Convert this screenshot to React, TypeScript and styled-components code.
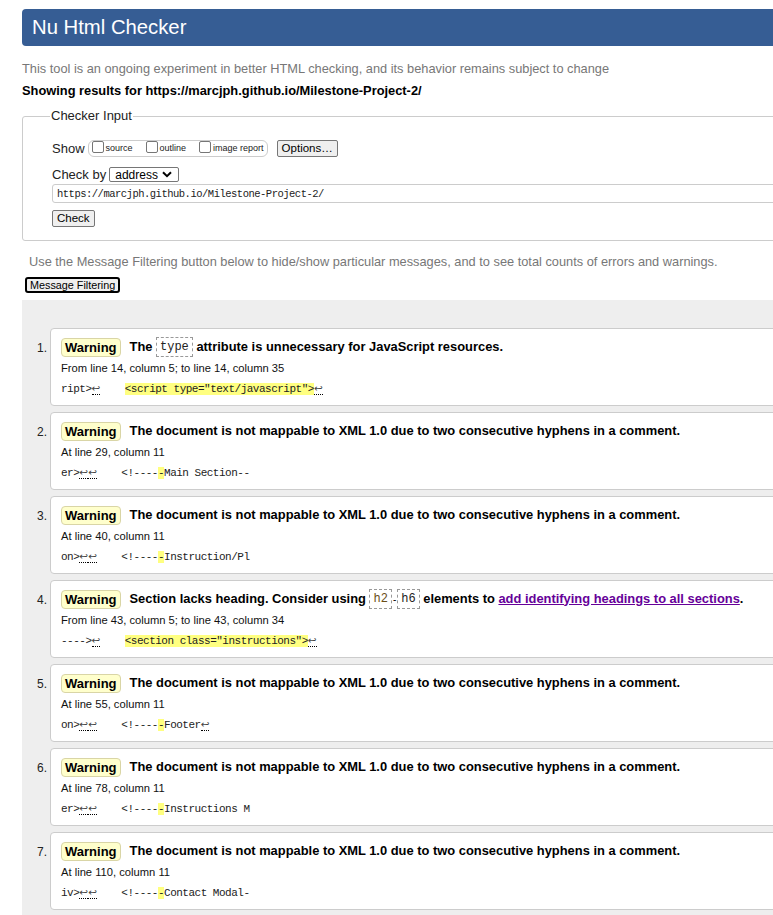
import React from 'react';
import styled, { createGlobalStyle } from 'styled-components';

type Piece =
  | { kind: 'text'; value: string }
  | { kind: 'nl' }
  | { kind: 'mark'; value: string };

type Message = {
  title: React.ReactNode;
  location: string;
  extract: Piece[];
};

const t = (value: string): Piece => ({ kind: 'text', value });
const nl: Piece = { kind: 'nl' };
const mark = (value: string): Piece => ({ kind: 'mark', value });

const hyphens = 'The document is not mappable to XML 1.0 due to two consecutive hyphens in a comment.';

const commentExtract = (before: string, after: string, trailingNl = false): Piece[] => {
  const pieces: Piece[] = [t(before), nl, nl, t('    <!----'), mark('-'), t(after)];
  if (trailingNl) pieces.push(nl);
  return pieces;
};

// built lazily so the styled parts below exist by the time it runs
const getMessages = (): Message[] => [
  {
    title: (
      <>
        The <Code>type</Code> attribute is unnecessary for JavaScript resources.
      </>
    ),
    location: 'From line 14, column 5; to line 14, column 35',
    extract: [t('ript>'), nl, t('    '), mark('<script type="text/javascript">'), nl],
  },
  {
    title: hyphens,
    location: 'At line 29, column 11',
    extract: commentExtract('er>', 'Main Section--'),
  },
  {
    title: hyphens,
    location: 'At line 40, column 11',
    extract: commentExtract('on>', 'Instruction/Pl'),
  },
  {
    title: (
      <>
        Section lacks heading. Consider using <Code $tint>h2</Code>
        <Dash>-</Dash>
        <Code>h6</Code> elements to{' '}
        <Link href="#">add identifying headings to all sections</Link>.
      </>
    ),
    location: 'From line 43, column 5; to line 43, column 34',
    extract: [t('---->'), nl, t('    '), mark('<section class="instructions">'), nl],
  },
  {
    title: hyphens,
    location: 'At line 55, column 11',
    extract: commentExtract('on>', 'Footer', true),
  },
  {
    title: hyphens,
    location: 'At line 78, column 11',
    extract: commentExtract('er>', 'Instructions M'),
  },
  {
    title: hyphens,
    location: 'At line 110, column 11',
    extract: commentExtract('iv>', 'Contact Modal-'),
  },
];

const Chevron = () => (
  <svg width="10" height="7" viewBox="0 0 10 7">
    <path d="M1 1.2 L5 5.2 L9 1.2" fill="none" stroke="#000" strokeWidth="2" />
  </svg>
);

const App: React.FC = () => (
  <>
    <GlobalStyle />
    <Page>
      <Banner>
        <Title>Nu Html Checker</Title>
      </Banner>
      <Intro>This tool is an ongoing experiment in better HTML checking, and its behavior remains subject to change</Intro>
      <Showing>Showing results for https://marcjph.github.io/Milestone-Project-2/</Showing>

      <Fieldset>
        <Legend>Checker Input</Legend>
        <ShowRow>
          <Label>Show</Label>
          <CheckGroup>
            <CheckLabel>
              <Box type="checkbox" />
              source
            </CheckLabel>
            <CheckLabel>
              <Box type="checkbox" />
              outline
            </CheckLabel>
            <CheckLabel>
              <Box type="checkbox" />
              image report
            </CheckLabel>
          </CheckGroup>
          <Button>Options…</Button>
        </ShowRow>
        <CheckByRow>
          <Label>Check by</Label>
          <Select>
            address
            <Chevron />
          </Select>
        </CheckByRow>
        <UrlInput>https://marcjph.github.io/Milestone-Project-2/</UrlInput>
        <SubmitRow>
          <Button>Check</Button>
        </SubmitRow>
      </Fieldset>

      <FilterNote>
        Use the Message Filtering button below to hide/show particular messages, and to see total counts of errors and warnings.
      </FilterNote>
      <FilterButton>Message Filtering</FilterButton>

      <ResultsPanel>
        <MessageList>
          {getMessages().map((msg, idx) => (
            <MessageRow key={`msg-${idx}`}>
              <Number>{idx + 1}.</Number>
              <Card>
                <TitleLine>
                  <Badge>Warning</Badge>
                  <MessageText>{msg.title}</MessageText>
                </TitleLine>
                <Location>{msg.location}</Location>
                <Extract>
                  {msg.extract.map((piece, i) => {
                    if (piece.kind === 'nl') return <Newline key={i} title="Line break">↩</Newline>;
                    if (piece.kind === 'mark') return <Highlight key={i}>{piece.value}</Highlight>;
                    return <span key={i}>{piece.value}</span>;
                  })}
                </Extract>
              </Card>
            </MessageRow>
          ))}
        </MessageList>
      </ResultsPanel>
    </Page>
  </>
);

export default App;

const GlobalStyle = createGlobalStyle`
  body {
    margin: 0;
    overflow: hidden;
    background: #fff;
    font-family: "Liberation Sans", Arial, sans-serif;
    color: #000;
  }
`;

const Page = styled.div`
  width: 830px;
  padding: 9px 0 0 22px;
`;

const Banner = styled.header`
  height: 37px;
  background: #365d94;
  border-radius: 4px;
  display: flex;
  align-items: center;
  padding-left: 10px;
`;

const Title = styled.h1`
  margin: 0;
  font-size: 20.3px;
  font-weight: normal;
  color: #fff;
`;

const Intro = styled.p`
  margin: 15px 0 0;
  font-size: 12.8px;
  line-height: 16px;
  color: #777;
`;

const Showing = styled.p`
  margin: 6px 0 0;
  font-size: 12.85px;
  line-height: 16px;
  font-weight: bold;
`;

const Fieldset = styled.fieldset`
  margin: 9px 0 0;
  padding: 0 0 13px 29px;
  border: 1px solid #ccc;
  border-radius: 3px;
`;

const Legend = styled.legend`
  margin-left: -2px;
  padding: 0 1px;
  font-size: 13px;
  line-height: 16px;
  color: #222;
`;

const ShowRow = styled.div`
  margin-top: 15px;
  height: 18px;
  display: flex;
  align-items: center;
`;

const CheckByRow = styled.div`
  margin-top: 9px;
  height: 17px;
  display: flex;
  align-items: center;
`;

const Label = styled.span`
  font-size: 13px;
  color: #222;
  margin-right: 3px;
`;

const CheckGroup = styled.span`
  height: 15px;
  display: flex;
  align-items: center;
  gap: 13px;
  padding: 0 3px 0 3px;
  border: 1px solid #ccc;
  border-radius: 6px;
  margin-right: 9px;
`;

const CheckLabel = styled.label`
  display: flex;
  align-items: center;
  font-size: 9px;
  color: #222;
`;

const Box = styled.input`
  appearance: none;
  width: 12px;
  height: 12px;
  margin: -2px 2px 0 0;
  border: 1px solid #767676;
  border-radius: 2px;
  background: #fff;
`;

const Button = styled.button`
  height: 17px;
  padding: 0 4px;
  font-family: "Liberation Sans", Arial, sans-serif;
  font-size: 11.5px;
  line-height: 15px;
  color: #000;
  background: #efefef;
  border: 1px solid #767676;
  border-radius: 2px;
`;

const Select = styled.span`
  width: 70px;
  height: 15px;
  box-sizing: border-box;
  display: flex;
  align-items: center;
  justify-content: space-between;
  padding: 0 6px 0 5px;
  font-size: 12px;
  border: 1px solid #767676;
  border-radius: 2px;
`;

const UrlInput = styled.div`
  margin-top: 1px;
  height: 19px;
  box-sizing: border-box;
  display: flex;
  align-items: center;
  padding-left: 4px;
  font-family: "Liberation Mono", "DejaVu Sans Mono", monospace;
  font-size: 10.5px;
  letter-spacing: -0.5px;
  color: #222;
  border: 1px solid #ccc;
  border-radius: 3px;
`;

const SubmitRow = styled.div`
  margin-top: 7px;
  display: flex;
`;

const FilterNote = styled.p`
  margin: 13px 0 0 7px;
  font-size: 12.8px;
  line-height: 16px;
  color: #777;
`;

const FilterButton = styled.button`
  display: block;
  margin: 7px 0 0 3px;
  height: 16px;
  padding: 0 3px;
  font-family: "Liberation Sans", Arial, sans-serif;
  font-size: 10.8px;
  line-height: 12px;
  color: #000;
  background: #efefef;
  border: 2px solid #000;
  border-radius: 3px;
`;

const ResultsPanel = styled.section`
  margin-top: 7px;
  background: #eee;
  padding: 28px 0 40px;
`;

const MessageList = styled.ol`
  list-style: none;
  margin: 0;
  padding: 0;
  display: flex;
  flex-direction: column;
  gap: 6px;
`;

const MessageRow = styled.li`
  display: flex;
  align-items: flex-start;
`;

const Number = styled.span`
  width: 28px;
  box-sizing: border-box;
  padding: 13px 3px 0 0;
  text-align: right;
  font-size: 12px;
  color: #222;
`;

const Card = styled.div`
  flex: 1;
  background: #fff;
  border: 1px solid #ccc;
  border-radius: 4px;
  padding: 8px 10px 8px;
`;

const TitleLine = styled.div`
  display: flex;
  align-items: center;
  gap: 9px;
  white-space: nowrap;
  height: 20px;
`;

const Badge = styled.span`
  height: 19px;
  box-sizing: border-box;
  padding: 0 3px;
  font-size: 13px;
  line-height: 17px;
  font-weight: bold;
  background: #ffc;
  border: 1px solid #d9d5a6;
  border-radius: 4px;
`;

const MessageText = styled.span`
  font-size: 12.9px;
  font-weight: bold;
  line-height: 20px;
`;

const Code = styled.code<{ $tint?: boolean }>`
  display: inline-block;
  height: 20px;
  box-sizing: border-box;
  padding: 0 3px;
  vertical-align: middle;
  font-family: "Liberation Mono", "DejaVu Sans Mono", monospace;
  font-size: 12px;
  line-height: 18px;
  font-weight: normal;
  color: ${({ $tint }) => ($tint ? '#6b4e16' : '#222')};
  border: 1px dashed #999;
`;

const Dash = styled.span`
  font-weight: normal;
  font-size: 10px;
  margin: 0 1px;
`;

const Link = styled.a`
  color: #609;
  text-decoration: underline;
`;

const Location = styled.div`
  margin-top: 4px;
  font-size: 11.2px;
  line-height: 14px;
  color: #111;
`;

const Extract = styled.div`
  margin-top: 6px;
  height: 16px;
  white-space: pre;
  font-family: "Liberation Mono", "DejaVu Sans Mono", monospace;
  font-size: 11px;
  letter-spacing: -0.5px;
  line-height: 14px;
  color: #222;
`;

const Highlight = styled.mark`
  background: #ffff80;
  color: #222;
`;

const Newline = styled.abbr`
  font-family: "DejaVu Sans", sans-serif;
  font-size: 10.5px;
  letter-spacing: 0;
  text-decoration: none;
  border-bottom: 1px dotted #000;
  color: #444;
`;
